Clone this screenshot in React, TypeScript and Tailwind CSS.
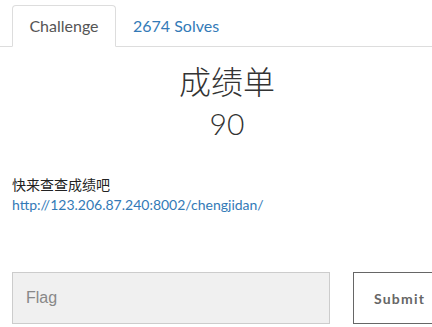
export default function App() {
  return (
    <div className="w-[432px] h-[327px] overflow-hidden bg-white font-['Lato','Noto_Sans_CJK_SC',sans-serif] text-[#333]">
      {/* tabs */}
      <div className="flex pt-[5px] pl-[12px] border-b border-[#ddd]">
        <div className="h-[42px] w-[104px] -mb-px flex items-center justify-center border border-[#ddd] border-b-white rounded-t-[4px] bg-white text-[16px] text-[#555]">
          Challenge
        </div>
        <div className="h-[41px] flex items-center pl-[17px] text-[16px] text-[#337ab7]">
          2674 Solves
        </div>
      </div>

      {/* title */}
      <div className="flex flex-col items-center pl-[22px] mt-[14px]">
        <h2 className="text-[32px] leading-[38px] text-[#333] font-['Noto_Sans_CJK_SC',sans-serif] font-light">
          成绩单
        </h2>
        <h3 className="text-[30px] leading-[36px] mt-[6px] font-light">90</h3>
      </div>

      {/* description */}
      <div className="px-[12px] mt-[32px]">
        <p className="text-[14px] leading-[22px] text-[#222] font-['Noto_Sans_CJK_SC',sans-serif]">
          快来查查成绩吧
        </p>
        <a className="block text-[14px] leading-[20px] text-[#337ab7]">
          http://123.206.87.240:8002/chengjidan/
        </a>
      </div>

      {/* flag form */}
      <div className="flex pl-[12px] mt-[57px] gap-[23px]">
        <div className="w-[318px] h-[52px] shrink-0 flex items-center pl-[13px] bg-[#f0f0f0] border border-[#ccc] font-['Liberation_Sans',sans-serif] text-[16px] text-[#888]">
          Flag
        </div>
        <div className="w-[100px] h-[52px] shrink-0 flex items-center pl-[20px] border border-[#666] text-[14px] font-bold tracking-[1.2px] text-[#666]">
          Submit
        </div>
      </div>
    </div>
  );
}
